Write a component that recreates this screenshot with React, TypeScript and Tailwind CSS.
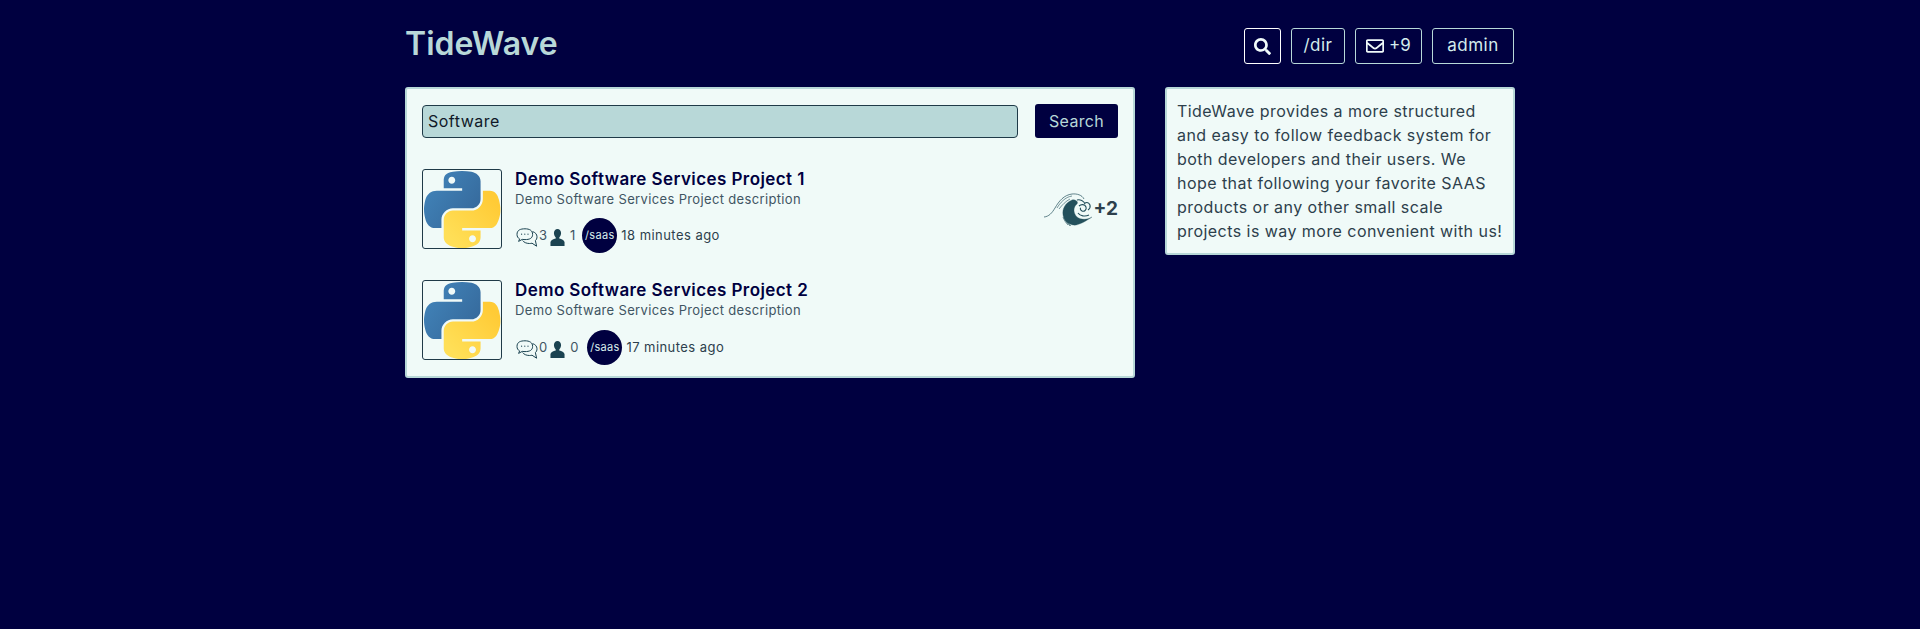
import { FaRegEnvelope, FaSearch } from "react-icons/fa";

const FONT = "font-['Inter','Open_Sans',sans-serif]";

function PythonLogo({ id }: { id: string }) {
  return (
    <svg viewBox="0 0 112 112" className="block w-[77px] h-[77px]">
      <defs>
        <linearGradient id={`${id}-b`} x1="0" y1="0.1" x2="1" y2="0.8">
          <stop offset="0" stopColor="#4285bb" />
          <stop offset="1" stopColor="#35689a" />
        </linearGradient>
        <linearGradient id={`${id}-y`} x1="0.9" y1="0.2" x2="0.2" y2="0.9">
          <stop offset="0" stopColor="#ffcb36" />
          <stop offset="1" stopColor="#ffdf57" />
        </linearGradient>
      </defs>
      <path
        fill={`url(#${id}-b)`}
        d="M54.92 0C50.34.02 45.96.41 42.11 1.09 30.76 3.1 28.7 7.29 28.7 15.03V25.25H55.51V28.66H18.64C10.85 28.66 4.02 33.34 1.89 42.25-.57 52.47-.68 58.84 1.89 69.5 3.79 77.43 8.35 83.09 16.14 83.09H25.36V70.84C25.36 61.99 33.01 54.18 42.11 54.18H68.89C76.34 54.18 82.29 48.04 82.29 40.56V15.03C82.29 7.77 76.16 2.31 68.89 1.09 64.28.33 59.5-.02 54.92 0ZM40.42 8.22C43.19 8.22 45.45 10.52 45.45 13.34 45.45 16.16 43.19 18.44 40.42 18.44 37.64 18.44 35.39 16.16 35.39 13.34 35.39 10.52 37.64 8.22 40.42 8.22Z"
      />
      <path
        fill={`url(#${id}-y)`}
        d="M85.64 28.66V40.56C85.64 49.78 77.82 57.55 68.89 57.55H42.11C34.77 57.55 28.7 63.82 28.7 71.17V96.7C28.7 103.96 35.02 108.23 42.11 110.32 50.6 112.81 58.74 113.27 68.89 110.32 75.63 108.36 82.29 104.43 82.29 96.7V86.48H55.51V83.07H95.7C103.49 83.07 106.4 77.64 109.11 69.48 111.91 61.08 111.79 53.01 109.11 42.23 107.18 34.48 103.5 28.66 95.7 28.66ZM70.58 93.32C73.35 93.32 75.61 95.6 75.61 98.41 75.61 101.24 73.35 103.54 70.58 103.54 67.81 103.54 65.54 101.24 65.54 98.41 65.54 95.6 67.81 93.32 70.58 93.32Z"
      />
    </svg>
  );
}

function ChatIcon() {
  return (
    <svg viewBox="0 0 22 20" className="w-[22px] h-5 shrink-0 mt-1 ml-[1px]" fill="none" stroke="#1b4351" strokeWidth="1">
      <path d="M9 .8C4.5.8 1 2 1 6.4c0 2.2 1 3.7 2.6 4.5L2.6 13.4l3.6-2c.9.1 1.8.2 2.8.2 4.4 0 7.6-1.2 7.6-5.2S13.4.8 9 .8z" />
      <path d="M16.6 3.6c2.6.8 4.4 2.6 4.4 5.2 0 1.6-.6 3-1.6 3.8l1.2 5.6-4.6-3c-.8.2-1.6.3-2.6.3-3 0-5.6-1.2-6.8-3" />
      <circle cx="5.6" cy="6.2" r=".6" fill="#1b4351" stroke="none" />
      <circle cx="8.8" cy="6.2" r=".6" fill="#1b4351" stroke="none" />
      <circle cx="12" cy="6.2" r=".6" fill="#1b4351" stroke="none" />
    </svg>
  );
}

function PersonIcon() {
  return (
    <svg viewBox="0 0 16 18" className="w-[15px] h-[17px] shrink-0 mt-1" fill="#1b4351">
      <path d="M8 0c2.3 0 3.8 1.8 3.8 4.3 0 1.9-.8 3.6-1.9 4.6v1.2c2.6.8 5.1 1.9 5.6 3.6V18H.5v-4.3c.5-1.7 3-2.8 5.6-3.6V8.9C5 7.9 4.2 6.2 4.2 4.3 4.2 1.8 5.7 0 8 0z" />
    </svg>
  );
}

function WaveIcon() {
  return (
    <svg viewBox="0 0 50 35" className="w-[50px] h-[35px] shrink-0" fill="none" stroke="#24505c">
      <path strokeWidth="0.7" d="M0 25c5-.5 8-4 11-9 4-7 9-13 17-14 5-.5 10 1 12 5" />
      <path strokeWidth="0.6" d="M13 16c3-5 8-11 15-12M15 17c3-4 7-8 11-10" />
      <path strokeWidth="0.6" d="M19 25c1 3 3 6 5 8M21 27c1 3 3 5 5 7M23 29c1 2 3 4 4 5" />
      <path
        fill="#24505c"
        strokeWidth="0.3"
        d="M28 8C21 11 18 17 19 23 20 29 24 32 29 33 34 34 42 29 48 25 43 28 37 28 33 25 29 21 29 15 33 12 35 10 31 7 28 8Z"
      />
      <path strokeWidth="1.1" d="M33 8c3-1 7 1 8 4M35 14c2-2 6-2 7 1 1 3-2 5-4 4-2-1-2-3-1-3" />
      <path strokeWidth="1.1" d="M41 11c2-1 4 0 5 2 .5 2-.5 4-2 5M34 21c2 3 7 4 11 2" />
    </svg>
  );
}

type Project = {
  name: string;
  comments: number;
  users: number;
  time: string;
  metaClass: string;
  avatarClass: string;
  boost?: number;
};

const projects: Project[] = [
  { name: "Demo Software Services Project 1", comments: 3, users: 1, time: "18 minutes ago", metaClass: "mt-[10px]", avatarClass: "ml-[7px]", boost: 2 },
  { name: "Demo Software Services Project 2", comments: 0, users: 0, time: "17 minutes ago", metaClass: "mt-[11px]", avatarClass: "ml-[9px]" },
];

function ProjectRow({ project, index }: { project: Project; index: number }) {
  return (
    <div className="flex items-start">
      <div className="w-20 h-20 shrink-0 border border-[#1f3a48] rounded-[3px] flex items-center justify-center">
        <PythonLogo id={`py${index}`} />
      </div>
      <div className="ml-[13px] flex-1 min-w-0">
        <h3 className="text-[17px] leading-[20px] font-semibold text-[#000040] tracking-[0.42px]">{project.name}</h3>
        <p className="text-[13px] leading-[18px] mt-[1px] text-[#3f5563] tracking-[0.35px]">
          Demo Software Services Project description
        </p>
        <div className={`flex items-center h-[35px] text-[13px] text-[#2d3f4c] ${project.metaClass}`}>
          <ChatIcon />
          <span className="ml-[1px] text-[#3f5563]">{project.comments}</span>
          <span className="ml-[3px]">
            <PersonIcon />
          </span>
          <span className="ml-[5px] text-[#3f5563]">{project.users}</span>
          <div className={`w-[35px] h-[35px] shrink-0 rounded-full bg-[#000040] flex items-center justify-center text-[11px] text-[#d8ecec] tracking-[0.3px] ${project.avatarClass}`}>
            /saas
          </div>
          <span className="ml-1 tracking-[0.45px]">{project.time}</span>
        </div>
      </div>
      {project.boost && (
        <div className="flex items-center self-start mt-[23px]">
          <WaveIcon />
          <span className="text-[19px] font-bold text-[#2d3f4c]">+{project.boost}</span>
        </div>
      )}
    </div>
  );
}

export default function App() {
  return (
    <div className={`min-h-[629px] bg-[#000040] ${FONT}`}>
      <div className="w-[1110px] mx-auto">
        {/* Header */}
        <header className="flex items-start justify-between pt-[28px] h-[87px] pr-[1px]">
          <h1 className="text-[32px] leading-[32px] font-semibold text-[#b8d8d8]">TideWave</h1>
          <nav className="flex gap-[10px] text-[17px] text-[#d4ecec]">
            <button className="h-9 w-[37px] flex items-center justify-center border border-white rounded-[3px] text-[#f0fafa]">
              <FaSearch size={17} />
            </button>
            <button className="h-9 w-[54px] border border-[#b8d8d8] rounded-[3px] tracking-[0.5px]">/dir</button>
            <button className="h-9 w-[67px] flex items-center justify-center gap-[5px] border border-[#b8d8d8] rounded-[3px]">
              <FaRegEnvelope size={18} className="text-[#f0fafa]" />
              +9
            </button>
            <button className="h-9 w-[82px] border border-[#b8d8d8] rounded-[3px] tracking-[0.5px]">admin</button>
          </nav>
        </header>

        <div className="flex items-start gap-[30px]">
          {/* Project list */}
          <main className="w-[730px] shrink-0 bg-[#f0faf8] border-2 border-[#b8d8d8] rounded-[3px] px-[15px] pt-[15px] pb-[11px]">
            <form className="flex items-center gap-[17px] mb-[31px]">
              <div className="flex-1 h-[33px] flex items-center px-[5px] bg-[#b8d8d8] border border-[#1f3a48] rounded-[4px] text-[16px] text-[#101828] tracking-[0.5px]">
                Software
              </div>
              <button className="w-[83px] h-[34px] bg-[#000040] rounded-[3px] text-[16px] text-[#b8d8d8] tracking-[0.3px]">
                Search
              </button>
            </form>
            <div className="flex flex-col gap-[27px]">
              {projects.map((p, i) => (
                <ProjectRow key={p.name} project={p} index={i} />
              ))}
            </div>
          </main>

          {/* About */}
          <aside className="w-[350px] shrink-0 bg-[#f0faf8] border-2 border-[#b8d8d8] rounded-[3px] px-[10px] py-[10px] text-[16px] leading-6 text-[#2d3f4c] tracking-[0.45px] whitespace-nowrap">
            TideWave provides a more structured
            <br />
            and easy to follow feedback system for
            <br />
            both developers and their users. We
            <br />
            hope that following your favorite SAAS
            <br />
            products or any other small scale
            <br />
            projects is way more convenient with us!
          </aside>
        </div>
      </div>
    </div>
  );
}
